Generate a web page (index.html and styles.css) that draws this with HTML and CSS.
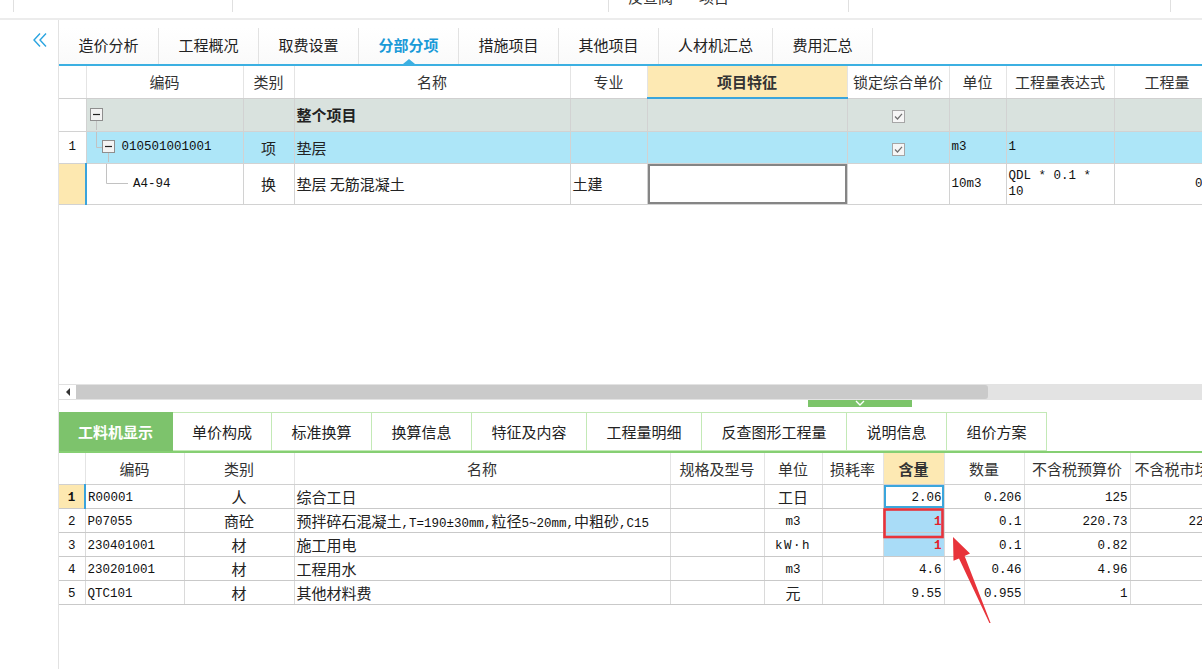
FILE: index.html
```html
<!DOCTYPE html>
<html>
<head>
<meta charset="utf-8">
<link rel="stylesheet" href="styles.css">
</head>
<body>
<div class="topbar">
  <div class="tc w14"></div>
  <div class="tc w219"></div>
  <div class="tc w376"></div>
  <div class="tc w240"><span class="cut t-a">反查阀</span><span class="cut t-b">项目</span></div>
  <div class="tc w322"></div>
  <div class="tc wrest"></div>
</div>
<div class="main">
  <div class="side">
    <svg class="collapse" width="16" height="16" viewBox="0 0 16 16"><path d="M8 1.5 L2 8 L8 14.5 M14 1.5 L8 8 L14 14.5" fill="none" stroke="#2aa4e0" stroke-width="1.4"/></svg>
  </div>
  <div class="content">
    <div class="tabs">
      <div class="tab w100">造价分析</div>
      <div class="tab w100">工程概况</div>
      <div class="tab w100">取费设置</div>
      <div class="tab w100 on">分部分项</div>
      <div class="tab w100">措施项目</div>
      <div class="tab w100">其他项目</div>
      <div class="tab w114">人材机汇总</div>
      <div class="tab w100">费用汇总</div>
    </div>
    <div class="grid1">
      <table class="t1">
        <colgroup>
          <col style="width:27px"><col style="width:157px"><col style="width:51px"><col style="width:276px"><col style="width:77px"><col style="width:200px"><col style="width:102px"><col style="width:57px"><col style="width:108px"><col style="width:106px">
        </colgroup>
        <tr class="hd">
          <th class="rn"></th><th>编码</th><th>类别</th><th>名称</th><th>专业</th><th class="feat">项目特征</th><th>锁定综合单价</th><th>单位</th><th>工程量表达式</th><th>工程量</th>
        </tr>
        <tr class="r0">
          <td class="rn"></td>
          <td class="tree"><div class="tw"><svg width="20" height="31" viewBox="0 0 20 31"><rect x="3.5" y="9.5" width="12" height="12" fill="#f3f3f3" stroke="#8e8e8e"/><path d="M6 15.5 H13" stroke="#222" stroke-width="1.2"/><path d="M9.5 22 V31" stroke="#c2c2c2"/></svg></div></td>
          <td></td>
          <td class="b">整个项目</td>
          <td></td><td></td>
          <td class="c"><svg class="chk" width="13" height="13" viewBox="0 0 13 13"><rect x="0.5" y="0.5" width="12" height="12" fill="#f6f6f6" stroke="#a6a6a6"/><path d="M3 6.5 L5.5 9 L10 3.8" fill="none" stroke="#707070" stroke-width="1.2"/></svg></td>
          <td></td><td></td><td></td>
        </tr>
        <tr class="r1">
          <td class="rn mono">1</td>
          <td class="tree"><div class="tw"><svg width="35" height="30" viewBox="0 0 35 30"><path d="M9.5 0 V15.5 H15" fill="none" stroke="#c2c2c2"/><rect x="15.5" y="8.5" width="12" height="12" fill="#f3f3f3" stroke="#8e8e8e"/><path d="M18 14.5 H25" stroke="#222" stroke-width="1.2"/><path d="M21.5 21 V30" stroke="#c2c2c2"/></svg><span class="mono">010501001001</span></div></td>
          <td class="c">项</td>
          <td>垫层</td>
          <td></td><td></td>
          <td class="c"><svg class="chk" width="13" height="13" viewBox="0 0 13 13"><rect x="0.5" y="0.5" width="12" height="12" fill="#f6f6f6" stroke="#a6a6a6"/><path d="M3 6.5 L5.5 9 L10 3.8" fill="none" stroke="#707070" stroke-width="1.2"/></svg></td>
          <td class="mono">m3</td>
          <td class="mono">1</td>
          <td></td>
        </tr>
        <tr class="r2">
          <td class="rn cur"></td>
          <td class="tree ind"><div class="tw"><svg width="46" height="39" viewBox="0 0 46 39"><path d="M19.5 0 V19.5 H41" fill="none" stroke="#c2c2c2"/></svg><span class="mono">A4-94</span></div></td>
          <td class="c">换</td>
          <td>垫层 无筋混凝土</td>
          <td>土建</td>
          <td class="edit"></td>
          <td></td>
          <td class="mono">10m3</td>
          <td class="mono wrap">QDL * 0.1 *<br>10</td>
          <td class="mono r">0.1</td>
        </tr>
      </table>
    </div>
    <div class="hscroll">
      <div class="sarrow"><svg width="6" height="8" viewBox="0 0 6 8"><path d="M5 0 L1 4 L5 8 Z" fill="#333"/></svg></div>
      <div class="thumb"></div>
    </div>
    <div class="splitter">
      <div class="handle"><svg width="12" height="7" viewBox="0 0 12 7"><path d="M2 1 L6 5 L10 1" fill="none" stroke="#fff" stroke-width="1.4"/></svg></div>
    </div>
    <div class="btabs">
      <div class="bt on w114">工料机显示</div>
      <div class="bt w99">单价构成</div>
      <div class="bt w100">标准换算</div>
      <div class="bt w100">换算信息</div>
      <div class="bt w115">特征及内容</div>
      <div class="bt w115">工程量明细</div>
      <div class="bt w145">反查图形工程量</div>
      <div class="bt w100">说明信息</div>
      <div class="bt w100">组价方案</div>
    </div>
    <div class="grid2">
      <table class="t2">
        <colgroup>
          <col style="width:26px"><col style="width:99px"><col style="width:110px"><col style="width:376px"><col style="width:94px"><col style="width:58px"><col style="width:61px"><col style="width:61px"><col style="width:80px"><col style="width:106px"><col style="width:106px">
        </colgroup>
        <tr class="hd">
          <th class="rn"></th><th>编码</th><th>类别</th><th>名称</th><th>规格及型号</th><th>单位</th><th>损耗率</th><th class="hl">含量</th><th>数量</th><th>不含税预算价</th><th class="lt">不含税市场价</th>
        </tr>
        <tr>
          <td class="rn cur b mono">1</td><td class="mono ind">R00001</td><td class="c">人</td><td>综合工日</td><td></td><td class="c">工日</td><td></td><td class="mono r sel">2.06</td><td class="mono r">0.206</td><td class="mono r">125</td><td></td>
        </tr>
        <tr>
          <td class="rn mono">2</td><td class="mono">P07055</td><td class="c">商砼</td><td>预拌碎石混凝土<span class="mono">,T=190±30mm,</span>粒径<span class="mono">5~20mm,</span>中粗砂<span class="mono">,C15</span></td><td></td><td class="c mono">m3</td><td></td><td class="mono r blue red">1</td><td class="mono r">0.1</td><td class="mono r">220.73</td><td class="mono r">220.73</td>
        </tr>
        <tr>
          <td class="rn mono">3</td><td class="mono">230401001</td><td class="c">材</td><td>施工用电</td><td></td><td class="c mono kwh">kW·h</td><td></td><td class="mono r blue red">1</td><td class="mono r">0.1</td><td class="mono r">0.82</td><td></td>
        </tr>
        <tr>
          <td class="rn mono">4</td><td class="mono">230201001</td><td class="c">材</td><td>工程用水</td><td></td><td class="c mono">m3</td><td></td><td class="mono r">4.6</td><td class="mono r">0.46</td><td class="mono r">4.96</td><td></td>
        </tr>
        <tr>
          <td class="rn mono">5</td><td class="mono">QTC101</td><td class="c">材</td><td>其他材料费</td><td></td><td class="c">元</td><td></td><td class="mono r">9.55</td><td class="mono r">0.955</td><td class="mono r">1</td><td></td>
        </tr>
      </table>
    </div>
  </div>
</div>
<svg class="annot" width="1202" height="669" viewBox="0 0 1202 669">
  <rect x="884.5" y="509.5" width="58" height="27.5" fill="none" stroke="#e8333a" stroke-width="2.6"/>
  <polygon points="953,537 970,553.6 964.6,556 990.6,623 989.4,623 959,558.4 953.5,560.8" fill="#e8333a"/>
</svg>
</body>
</html>
```
FILE: styles.css
```css
* { box-sizing: border-box; }
html, body { margin: 0; padding: 0; }
body {
  width: 1202px;
  height: 669px;
  overflow: hidden;
  position: relative;
  background: #fff;
  font-family: "Noto Sans CJK SC", "Microsoft YaHei", sans-serif;
  font-size: 15px;
  color: #222;
}
.mono {
  font-family: "Liberation Mono", "Noto Sans CJK SC", monospace;
  font-size: 12.5px;
  color: #111;
}

/* top strip */
.topbar {
  display: flex;
  height: 20px;
  border-bottom: 2px solid #ececec;
  overflow: hidden;
}
.tc { height: 12px; border-right: 1px solid #e0e0e0; overflow: hidden; display: flex; align-items: flex-end; }
.w14 { width: 14px; }
.w219 { width: 219px; }
.w376 { width: 376px; }
.w240 { width: 240px; }
.w322 { width: 322px; }
.wrest { flex: 1; border-right: none; }
.cut { display: block; font-size: 15px; line-height: 15px; margin-bottom: 8px; color: #333; }
.t-a { margin-left: 19px; }
.t-b { margin-left: 26px; }

/* main */
.main { display: flex; height: 649px; }
.side { width: 58px; flex: none; padding: 12px 0 0 32px; }
.collapse { display: block; }
.content {
  flex: 1;
  min-width: 0;
  border-left: 1px solid #e2e2e2;
  display: flex;
  flex-direction: column;
  overflow: hidden;
}

/* tabs */
.tabs {
  height: 46px;
  flex: none;
  display: flex;
  align-items: flex-end;
  border-bottom: 2px solid #3cb0e2;
}
.tab {
  position: relative;
  height: 36px;
  line-height: 33px;
  text-align: center;
  border-right: 1px solid #e2e2e2;
  background: linear-gradient(#ffffff, #fafafa);
  color: #222;
}
.w100 { width: 100px; }
.w114 { width: 114px; }
.w99 { width: 99px; }
.w115 { width: 115px; }
.w145 { width: 145px; }
.tab.on { color: #1a9ad8; font-weight: bold; }
.tab.on::after {
  content: "";
  position: absolute;
  left: 50%;
  bottom: 0;
  margin-left: -6px;
  border-left: 6px solid transparent;
  border-right: 6px solid transparent;
  border-bottom: 5px solid #3cb0e2;
}

/* table 1 */
.grid1 { height: 318px; flex: none; overflow: hidden; }
table { border-collapse: collapse; table-layout: fixed; }
.t1 { width: 1161px; }
.t1 th, .t1 td, .t2 th, .t2 td {
  padding: 0 2px;
  white-space: nowrap;
  overflow: hidden;
  border: 1px solid #d2d2d2;
  vertical-align: middle;
}
.t1 th, .t2 th {
  font-weight: normal;
  color: #333;
  border-top: none;
  border-color: #e4e4e4;
  border-bottom-color: #d0d0d0;
  background: #fff;
}
.t1 tr > :first-child, .t2 tr > :first-child { border-left: none; }
.t1 .hd { height: 32px; }
.t1 .feat { background: #fde9b3; font-weight: bold; border-bottom: 2px solid #3aa5dc; }
.t1 .r0 { height: 33px; }
.t1 .r0 td { background: #d9e2de; }
.t1 .r1 { height: 32px; }
.t1 .r1 td { background: #ade6f8; }
.t1 .r2 { height: 41px; }
.t1 .r0 td.rn, .t1 .r1 td.rn { background: #fff; }
td.rn { text-align: center; padding: 0; }
td.cur { background: #fde8b0 !important; }
td.ind { border-left: 2px solid #3aa3dc !important; }
.t1 td.tree { padding: 0; }
.tw { display: flex; align-items: center; }
.tw svg { display: block; flex: none; }
.b { font-weight: bold; }
.c { text-align: center; }
.r { text-align: right; }
.chk { display: inline-block; vertical-align: middle; }
td.edit { box-shadow: inset 0 0 0 2px #858585; background: #fff; }
td.wrap { line-height: 16px; white-space: normal; }

/* scrollbar */
.hscroll {
  height: 16px;
  flex: none;
  display: flex;
  background: #e3e3e3;
}
.sarrow {
  width: 17px;
  background: #fff;
  display: flex;
  align-items: center;
  justify-content: center;
  border-top: 1px solid #e0e0e0;
  border-bottom: 1px solid #e0e0e0;
}
.thumb {
  width: 912px;
  margin: 1px 0;
  background: #cacaca;
  border-radius: 0 3px 3px 0;
}

/* splitter */
.splitter { height: 12px; flex: none; display: flex; }
.handle {
  margin-left: 749px;
  width: 104px;
  height: 7px;
  background: #7cc46a;
  display: flex;
  justify-content: center;
  align-items: flex-start;
}
.handle svg { display: block; }

/* bottom tabs */
.btabs {
  height: 41px;
  flex: none;
  display: flex;
  border-bottom: 2px solid #86cf73;
}
.bt {
  height: 39px;
  line-height: 37px;
  text-align: center;
  border: 1px solid #c3e9b6;
  border-left: none;
  color: #222;
}
.bt.on {
  background: #7dc36c;
  border-color: #7dc36c;
  color: #fff;
  font-weight: bold;
}

/* table 2 */
.grid2 { flex: 1; overflow: hidden; }
.t2 { width: 1177px; }
.t2 .hd { height: 31px; }
.t2 tr { height: 24px; }
.t2 td { border-color: #c9c9c9; border-left-color: #dadada; border-right-color: #dadada; }
.t2 td.mono { padding-top: 3px; }
.t2 th.hl { background: #fde9b3; font-weight: bold; }
.t2 th.lt { text-align: left; padding-left: 4px; }
.t2 td.sel { box-shadow: inset 0 0 0 2px #3ba6dc; }
.t2 td.blue { background: #a9dcf7; }
.t2 td.red { color: #e5202a; font-weight: bold; }
.kwh { letter-spacing: 1.5px; }

/* annotation overlay */
.annot {
  position: absolute;
  left: 0;
  top: 0;
  pointer-events: none;
}
```
